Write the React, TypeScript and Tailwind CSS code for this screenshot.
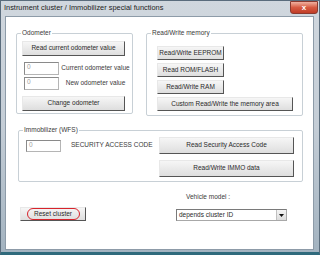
function Btn({ label, className = "" }: { label: string; className?: string }) {
  return (
    <div
      className={`flex items-center justify-center bg-linear-to-b from-[#f6f6f6] to-[#dedede] border border-t-[#e8e8e8] border-l-[#e8e8e8] border-r-[#555] border-b-[#555] text-[#2a2a2a] text-[6.5px] leading-none ${className}`}
    >
      {label}
    </div>
  );
}

function Field({ className = "" }: { className?: string }) {
  return (
    <div
      className={`flex items-start pl-[2px] pt-[1px] bg-white border border-[#b5b5b5] border-t-[#8a8a8a] border-l-[#8a8a8a] text-[#a0a0a0] text-[6.5px] leading-none ${className}`}
    >
      0
    </div>
  );
}

function Group({ title, className = "", children }: { title: string; className?: string; children: React.ReactNode }) {
  return (
    <div className={`relative border border-[#c8d0d6] rounded-[2px] ${className}`}>
      <span className="absolute -top-[4px] left-[4px] bg-white px-[1px] text-[6.5px] leading-none text-[#3a3a3a]">
        {title}
      </span>
      {children}
    </div>
  );
}

export default function App() {
  return (
    <div className="w-[320px] h-[255px] flex flex-col overflow-hidden bg-linear-to-b from-[#d0d7de] via-[#c4cdd6] to-[#a3b3c0] border border-[#5a6c7c] border-b-[3px] border-b-[#2f6a7c] font-['Liberation_Sans',Arial,sans-serif]">
      {/* Title bar */}
      <div className="h-[15px] flex items-start">
        <div className="pl-[3px] pt-[3px] text-[7.4px] leading-[8px] text-[#222]">
          Instrument cluster / Immobilizer special functions
        </div>
        <div className="ml-auto mr-[1px] w-[28px] h-[13px] rounded-b-[3px] border border-[#8a3a30] bg-linear-to-b from-[#eeb0a0] via-[#d65a42] to-[#c03c26] flex items-center justify-center text-white text-[8px] font-bold leading-none">
          x
        </div>
      </div>

      {/* Client area */}
      <div className="flex-1 ml-[4px] mr-[5px] mb-[2px] bg-white border border-[#8d9ba8] pt-[16px] px-[10px]">
        <div className="flex items-start gap-[13px]">
          <Group title="Odometer" className="w-[117px] h-[81px] pl-[5px] pt-[7px]">
            <Btn label="Read current odometer value" className="w-[103px] h-[15px]" />
            <div className="mt-[6px] flex items-center pl-[2px]">
              <Field className="w-[35px] h-[13px]" />
              <span className="flex-1 text-center text-[6.5px] leading-none text-[#3a3a3a]">Current odometer value</span>
            </div>
            <div className="mt-[2px] flex items-center pl-[2px]">
              <Field className="w-[35px] h-[13px]" />
              <span className="flex-1 text-center text-[6.5px] leading-none text-[#3a3a3a]">New odometer value</span>
            </div>
            <Btn label="Change odometer" className="mt-[6px] w-[103px] h-[15px]" />
          </Group>

          <Group title="Read/Write memory" className="w-[157px] h-[83px] pl-[10px] pt-[12px] flex flex-col gap-[3px]">
            <Btn label="Read/Write EEPROM" className="w-[67px] h-[14px]" />
            <Btn label="Read ROM/FLASH" className="w-[67px] h-[14px]" />
            <Btn label="Read/Write RAM" className="w-[67px] h-[14px]" />
            <Btn label="Custom Read/Write the memory area" className="w-[136px] h-[14px]" />
          </Group>
        </div>

        <Group title="Immobilizer (WFS)" className="mt-[14px] ml-[2px] w-[285px] h-[52px] flex items-start pl-[7px] pt-[6px]">
          <div className="flex items-center h-[17px] gap-[10px]">
            <Field className="w-[35px] h-[12px]" />
            <span className="text-[6.5px] leading-none text-[#3a3a3a]">SECURITY ACCESS CODE</span>
          </div>
          <div className="ml-auto mr-[8px] flex flex-col gap-[6px]">
            <Btn label="Read Security Access Code" className="w-[135px] h-[17px]" />
            <Btn label="Read/Write IMMO data" className="w-[135px] h-[17px]" />
          </div>
        </Group>

        <div className="mt-[11px] flex items-start">
          <div className="relative ml-[4px] mt-[14px]">
            <Btn label="Reset cluster" className="w-[66px] h-[14px]" />
            <div className="absolute left-[7px] right-[6px] top-[1px] bottom-[1px] rounded-full border-[1.5px] border-[#d8242c]" />
          </div>
          <div className="ml-[90px] flex flex-col">
            <span className="pl-[10px] text-[6.5px] leading-[8px] text-[#3a3a3a]">Vehicle model :</span>
            <div className="mt-[8px] w-[111px] h-[12px] flex items-stretch bg-white border border-[#a8a8a8] border-t-[#7a7a7a] border-l-[#7a7a7a]">
              <span className="flex-1 pl-[2px] text-[6.5px] leading-[10px] text-[#2a2a2a]">depends cluster ID</span>
              <div className="w-[10px] flex items-center justify-center bg-linear-to-b from-[#f4f4f4] to-[#dcdcdc] border-l border-[#c0c0c0]">
                <svg width="5" height="3" viewBox="0 0 5 3">
                  <path d="M0 0h5L2.5 3z" fill="#111" />
                </svg>
              </div>
            </div>
          </div>
        </div>
      </div>
    </div>
  );
}
